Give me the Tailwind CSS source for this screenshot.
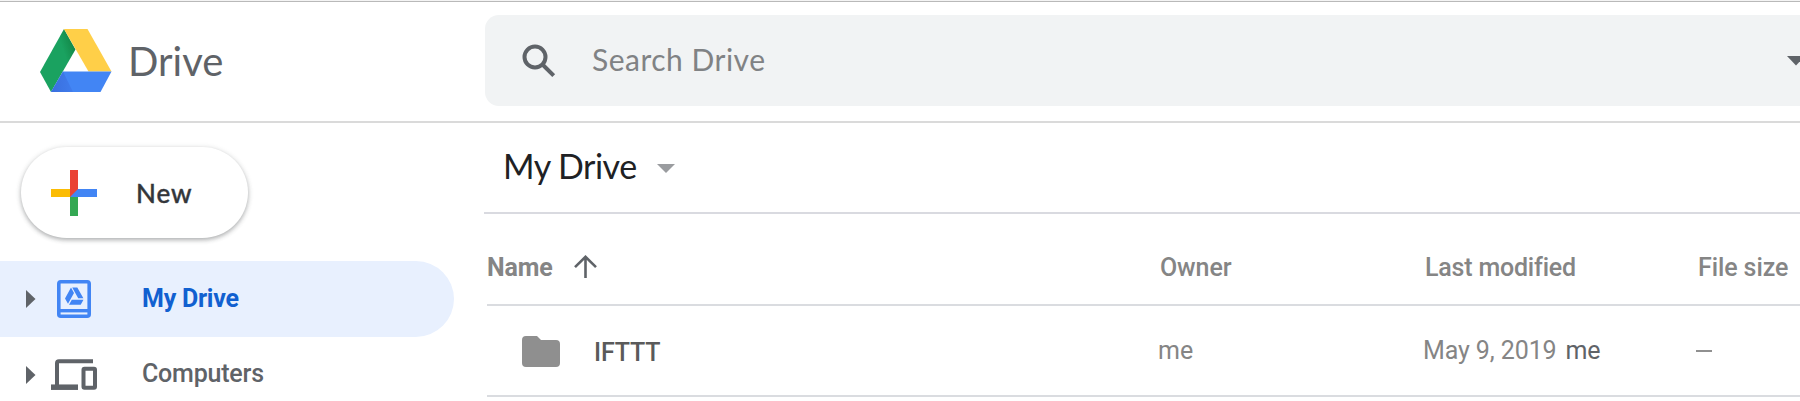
<!DOCTYPE html>
<html lang="en">
<head>
<meta charset="utf-8">
<title>My Drive</title>
<script src="https://cdn.jsdelivr.net/npm/@tailwindcss/browser@4"></script>
</head>
<body class="w-[1800px] h-[401px] overflow-hidden bg-white font-['Roboto',sans-serif] text-[25px]">
<div class="h-[2px] bg-[#f4f4f4] border-b border-[#b9b9b9]"></div>
<header class="flex h-[121px] border-b-2 border-[#dadada]">
  <div class="flex w-[485px] pl-[40px] pt-[27px]">
    <svg class="w-[72px] h-[63px] shrink-0" viewBox="0 0 72 63">
      <defs>
        <linearGradient id="g" x1="0.9" y1="0.2" x2="0.5" y2="0.45"><stop offset="0" stop-color="#138a4a"/><stop offset=".6" stop-color="#1aa260"/></linearGradient>
        <linearGradient id="b" x1="0" y1="0" x2="1" y2="0"><stop offset="0" stop-color="#3a6fde"/><stop offset="1" stop-color="#3f7cec"/></linearGradient>
      </defs>
      <path fill="url(#g)" d="M24 0L35.500 20.500L11 63L0 43z"/>
      <path fill="#ffcf48" d="M24 0H47.500L71.500 42.500H48.500z"/>
      <path fill="#4285f4" d="M23 42.500H71.500L60.500 63H11z"/>
      <path fill="url(#b)" d="M23 42.500L33 63H11z"/>
    </svg>
    <div class="ml-[16px] h-[64px] leading-[64px] font-['Lato',sans-serif] text-[40px] text-[#5f6368] whitespace-nowrap">Drive</div>
  </div>
  <div class="flex items-center w-[1315px] h-[91px] mt-[13px] rounded-l-[14px] bg-[#f1f3f4]">
    <svg class="ml-[37px] w-[34px] h-[34px] shrink-0" viewBox="0 0 34 34" fill="none" stroke="#5f6368" stroke-width="4"><circle cx="13" cy="13" r="10.500"/><path d="M20.500 20.500L31.700 31.700"/></svg>
    <div class="ml-[36px] mb-[3px] font-['Lato',sans-serif] text-[30px] tracking-[0.5px] text-[#808284] whitespace-nowrap">Search Drive</div>
    <svg class="ml-auto w-[13px] h-[10px] shrink-0 mt-[1px]" viewBox="0 0 13 10"><path fill="#5f6368" d="M0 0H18L9 9.500z"/></svg>
  </div>
</header>
<div class="flex">
  <aside class="w-[484px] shrink-0 pt-[24px] font-medium text-[#5f6368]">
    <button class="flex items-center ml-[21px] w-[227px] h-[91px] rounded-full bg-white shadow-[0_2px_4px_rgba(60,64,67,0.35),0_1px_6px_rgba(60,64,67,0.12)]">
      <svg class="ml-[30px] w-[46px] h-[46px] shrink-0" viewBox="0 0 46 46">
        <path fill="#34a853" d="M19 23H27V46H19z"/><path fill="#4285f4" d="M23 19H46V27H19z"/><path fill="#fbbc04" d="M0 19H23L19 27H0z"/><path fill="#ea4335" d="M19 0H27V19L19 27z"/>
      </svg>
      <span class="ml-[39px] mt-[1px] font-['Lato',sans-serif] font-medium text-[26px] tracking-[0.9px] text-[#33363a] [-webkit-text-stroke:0.4px_#33363a]">New</span>
    </button>
    <div class="flex items-center mt-[23px] w-[454px] h-[76px] rounded-r-full bg-[#e8f0fe]">
      <svg class="ml-[26px] w-[10px] h-[18px] shrink-0" viewBox="0 0 10 18"><path fill="#5f6368" d="M0 0L9.500 9L0 18z"/></svg>
      <svg class="ml-[21px] w-[34px] h-[38px] shrink-0" viewBox="0 0 34 38">
        <rect x="1.800" y="1.800" width="30.400" height="34.400" rx="2" fill="none" stroke="#4285f4" stroke-width="3.600"/>
        <path stroke="#4285f4" stroke-width="3.400" d="M2 30.700H32"/>
        <path fill="#4285f4" d="M14 7.600L17 13L11 23.800L8 18.600zM15.200 7.600H20.300L26.400 18.300H21.200zM14.800 19.800H26.500L23.700 24.800H12z"/>
      </svg>
      <span class="ml-[51px] text-[#1160d0] font-bold tracking-[-0.25px]">My Drive</span>
    </div>
    <div class="flex items-center w-[454px] h-[75px]">
      <svg class="ml-[26px] w-[10px] h-[18px] shrink-0" viewBox="0 0 10 18"><path fill="#5f6368" d="M0 0L9.500 9L0 18z"/></svg>
      <svg class="ml-[15px] w-[46px] h-[31px] shrink-0" viewBox="0 0 46 31" fill="none" stroke="#5f6368">
        <path stroke-width="4" d="M42 2.200H8Q6 2.200 6 4.200V26"/><path stroke-width="5.500" d="M0 28.200H27"/><rect x="32.500" y="9.800" width="11.500" height="19" rx="1" stroke-width="4"/>
      </svg>
      <span class="ml-[45px] mb-px tracking-[-0.2px]">Computers</span>
    </div>
  </aside>
  <main class="w-[1316px]">
    <div class="flex items-center h-[91px] pl-[19px] border-b-2 border-[#d9dae0]">
      <h1 class="font-['Lato',sans-serif] text-[34px] leading-[40px] tracking-[-0.5px] text-[#202124] whitespace-nowrap mb-[4px]">My Drive</h1>
      <svg class="ml-[20px] mt-[2px] w-[18px] h-[9px] shrink-0" viewBox="0 0 18 9"><path fill="#9a9c9f" d="M0 0H18L9 9z"/></svg>
    </div>
    <div class="ml-[3px] flex items-center h-[92px] pt-[18px] border-b-2 border-[#dadce0] font-medium text-[#858585] tracking-[-0.1px] whitespace-nowrap">
      <div class="flex items-center w-[673px] font-bold"><span>Name</span>
        <svg class="ml-[21px] mb-[3px] w-[23px] h-[23px]" viewBox="0 0 23 23" fill="none" stroke="#5f6368" stroke-width="2.600"><path d="M11.500 23V2M1 12.200L11.500 1.800L22 12.200"/></svg></div>
      <div class="w-[265px]">Owner</div>
      <div class="w-[273px] tracking-[-0.2px]">Last modified</div>
      <div>File size</div>
    </div>
    <div class="ml-[3px] flex items-center h-[91px] pt-px border-b-2 border-[#dadce0] text-[#858585] whitespace-nowrap">
      <svg class="ml-[35px] mt-px w-[38px] h-[31px] shrink-0" viewBox="0 0 38 31"><path fill="#8f8f8f" d="M4 0H15L19 4H34Q38 4 38 8V27Q38 31 34 31H4Q0 31 0 27V4Q0 0 4 0z"/></svg>
      <div class="ml-[34px] mt-[4px] w-[564px] font-medium text-[#5a5a5a] tracking-[-0.2px]">IFTTT</div>
      <div class="w-[265px]">me</div>
      <div class="w-[273px] tracking-[-0.1px]">May 9, 2019<span class="ml-[9px] text-[#5f6368]">me</span></div>
      <div class="w-[16px] h-[2px] bg-[#909090]"></div>
    </div>
  </main>
</div>
</body>
</html>
